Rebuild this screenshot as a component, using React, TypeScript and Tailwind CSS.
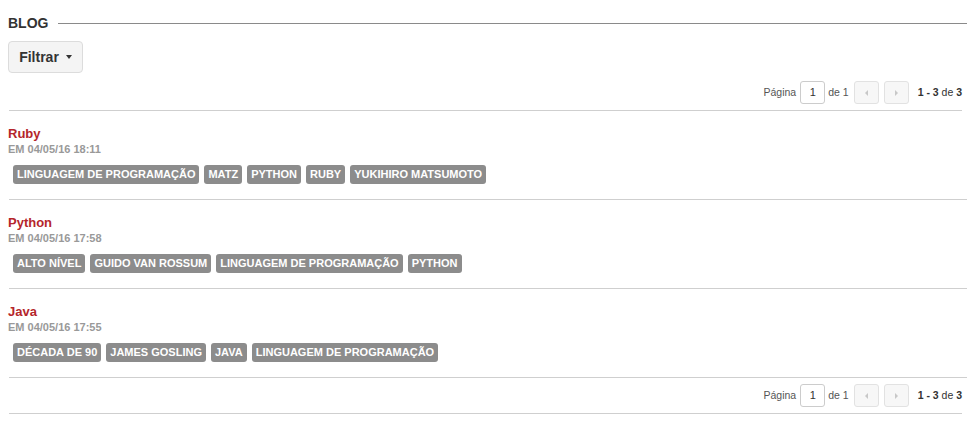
import React from "react";

type Post = {
  title: string;
  date: string;
  tags: string[];
};

const POSTS: Post[] = [
  {
    title: "Ruby",
    date: "EM 04/05/16 18:11",
    tags: ["LINGUAGEM DE PROGRAMAÇÃO", "MATZ", "PYTHON", "RUBY", "YUKIHIRO MATSUMOTO"],
  },
  {
    title: "Python",
    date: "EM 04/05/16 17:58",
    tags: ["ALTO NÍVEL", "GUIDO VAN ROSSUM", "LINGUAGEM DE PROGRAMAÇÃO", "PYTHON"],
  },
  {
    title: "Java",
    date: "EM 04/05/16 17:55",
    tags: ["DÉCADA DE 90", "JAMES GOSLING", "JAVA", "LINGUAGEM DE PROGRAMAÇÃO"],
  },
];

const Pager = ({ className }: { className: string }) => (
  <div className={`ml-px mr-[5px] flex items-center justify-end border-b border-[#cfcfcf] text-[10.5px] text-[#555] ${className}`}>
    <span>Página</span>
    <div className="ml-[4px] flex h-[23px] w-[25px] items-center justify-center rounded-[3px] border border-[#ccc] text-[11px] text-[#333]">
      1
    </div>
    <span className="ml-[3px]">de 1</span>
    <button className="ml-[5px] flex h-[23px] w-[25px] items-center justify-center rounded-[3px] border border-[#e2e2e2] bg-[#f7f7f7]">
      <span className="h-0 w-0 border-y-[3px] border-r-[3px] border-y-transparent border-r-[#c8c8c8]" />
    </button>
    <button className="ml-[5px] flex h-[23px] w-[25px] items-center justify-center rounded-[3px] border border-[#e2e2e2] bg-[#f7f7f7]">
      <span className="h-0 w-0 border-y-[3px] border-l-[3px] border-y-transparent border-l-[#c8c8c8]" />
    </button>
    <span className="ml-[9px] text-[#333]">
      <b>1 - 3</b> de <b>3</b>
    </span>
  </div>
);

export default function App() {
  return (
    <div className="min-h-screen bg-white px-2 font-['Liberation_Sans',Arial,sans-serif] text-[#333]">
      {/* Header */}
      <div className="flex items-center pt-[14px]">
        <h1 className="text-[14px] font-bold leading-[18px] text-[#333]">BLOG</h1>
        <div className="ml-[10px] h-px flex-1 bg-[#8a8a8a]" />
      </div>

      <button className="mt-[9px] flex h-[32px] w-[75px] items-center justify-center gap-[7px] rounded-[4px] border border-[#dcdcdc] bg-[#f4f4f4] text-[14px] font-bold text-[#333]">
        Filtrar
        <span className="h-0 w-0 border-x-[3px] border-t-[4px] border-x-transparent border-t-[#333]" />
      </button>

      <Pager className="mt-[8px] pb-[6px]" />

      {POSTS.map((post) => (
        <div key={post.title}>
          <div className="pb-[15px] pt-[15px]">
            <h2 className="text-[13px] font-bold leading-[15px] text-[#b5262b]">{post.title}</h2>
            <p className="mt-[2px] text-[11px] font-bold leading-[13px] text-[#999]">{post.date}</p>
            <div className="ml-[5px] mt-[9px] flex flex-wrap gap-[5px]">
              {post.tags.map((tag) => (
                <span
                  key={tag}
                  className="rounded-[3px] bg-[#8c8c8c] px-[4px] py-[3px] text-[11px] font-bold leading-[13px] text-white"
                >
                  {tag}
                </span>
              ))}
            </div>
          </div>
          <div className="ml-px h-px bg-[#cfcfcf]" />
        </div>
      ))}

      <Pager className="pb-[6px] pt-[6px]" />
    </div>
  );
}
